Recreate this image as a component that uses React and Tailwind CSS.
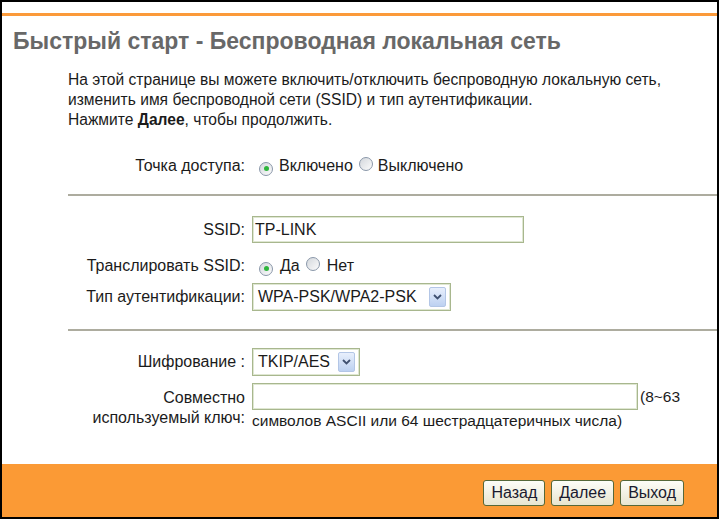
import React from "react";

function Radio({ checked }) {
  return (
    <span className="inline-flex items-center justify-center w-[14px] h-[14px] rounded-full border border-[#8a97a9] bg-linear-to-br from-[#d3d7dc] to-[#fcfcfc] shrink-0">
      {checked && <span className="w-[5px] h-[5px] rounded-full bg-[#2eb53b]" />}
    </span>
  );
}

function Arrow() {
  return (
    <span className="flex items-center justify-center w-[17px] h-[20px] rounded-[2px] border border-[#b3c6e6] bg-linear-to-b from-[#e8effc] to-[#bdd1f1]">
      <svg width="9" height="6" viewBox="0 0 9 6">
        <path d="M1 1 L4.5 4.5 L8 1" fill="none" stroke="#3f5070" strokeWidth="1.8" />
      </svg>
    </span>
  );
}

function Select({ value, width }) {
  return (
    <div
      className={`flex items-center justify-between h-[28px] pl-[5px] pr-[4px] bg-white border border-[#a8b78e] shadow-[inset_0_0_0_1px_#dfe7d2] ${width}`}
    >
      <span>{value}</span>
      <Arrow />
    </div>
  );
}

function Row({ label, children, className = "" }) {
  return (
    <div className={`flex items-center ${className}`}>
      <div className="ml-[68px] w-[175px] shrink-0 flex flex-col items-end leading-[20px] whitespace-nowrap">
        {label}
      </div>
      <div className="ml-[7px]">{children}</div>
    </div>
  );
}

function Button({ children }) {
  return (
    <button className="h-[26px] px-[7px] rounded-[3px] border border-[#56683a] bg-linear-to-b from-[#fdfdf8] to-[#e8e5d0] text-[16px] text-[#1a1a2e] leading-none">
      {children}
    </button>
  );
}

export default function App() {
  return (
    <div className="w-[719px] h-[519px] border-2 border-black bg-white flex flex-col font-['Liberation_Sans',Arial,sans-serif] text-[16px] text-[#1b1b1b]">
      <div className="mt-[11px] h-[3px] bg-[#fb9a3a]" />
      <h1 className="mt-[12px] ml-[11px] text-[23px] leading-[26px] font-bold text-[#686868]">
        Быстрый старт - Беспроводная локальная сеть
      </h1>
      <p className="mt-[16px] ml-[66px] text-[15.6px] leading-[20px]">
        На этой странице вы можете включить/отключить беспроводную локальную сеть,
        <br />
        изменить имя беспроводной сети (SSID) и тип аутентификации.
        <br />
        Нажмите <b>Далее</b>, чтобы продолжить.
      </p>

      <Row label="Точка доступа:" className="mt-[24px] h-[24px]">
        <div className="flex items-center">
          <span className="ml-[7px]"><Radio checked /></span>
          <span className="ml-[6px]">Включено</span>
          <span className="ml-[6px]"><Radio /></span>
          <span className="ml-[5px]">Выключено</span>
        </div>
      </Row>

      <div className="mt-[16px] ml-[66px] h-[2px] bg-[#adac9f]" />

      <Row label="SSID:" className="mt-[20px]">
        <div className="w-[272px] h-[27px] flex items-center pl-[2px] border border-[#a8b78e] shadow-[inset_0_0_0_1px_#dfe7d2]">
          TP-LINK
        </div>
      </Row>

      <Row label="Транслировать SSID:" className="mt-[11px] h-[24px]">
        <div className="flex items-center">
          <span className="ml-[7px]"><Radio checked /></span>
          <span className="ml-[7px]">Да</span>
          <span className="ml-[6px]"><Radio /></span>
          <span className="ml-[7px]">Нет</span>
        </div>
      </Row>

      <Row label="Тип аутентификации:" className="mt-[5px]">
        <Select value="WPA-PSK/WPA2-PSK" width="w-[199px]" />
      </Row>

      <div className="mt-[18px] ml-[66px] h-[2px] bg-[#adac9f]" />

      <Row label="Шифрование :" className="mt-[17px]">
        <Select value="TKIP/AES" width="w-[108px]" />
      </Row>

      <Row
        label={
          <>
            <span>Совместно</span>
            <span>используемый ключ:</span>
          </>
        }
        className="mt-[7px]"
      >
        <div className="flex flex-col">
          <div className="flex items-center">
            <div className="w-[386px] h-[27px] border border-[#a8b78e] shadow-[inset_0_0_0_1px_#dfe7d2]" />
            <span className="ml-[2px] text-[15.5px]">(8~63</span>
          </div>
          <div className="leading-[22px] text-[15.5px]">символов ASCII или 64 шестрадцатеричных числа)</div>
        </div>
      </Row>

      <div className="mt-auto h-[53px] bg-[#fb9a35] flex items-start justify-end gap-[6px] pt-[16px] pr-[33px]">
        <Button>Назад</Button>
        <Button>Далее</Button>
        <Button>Выход</Button>
      </div>
    </div>
  );
}
